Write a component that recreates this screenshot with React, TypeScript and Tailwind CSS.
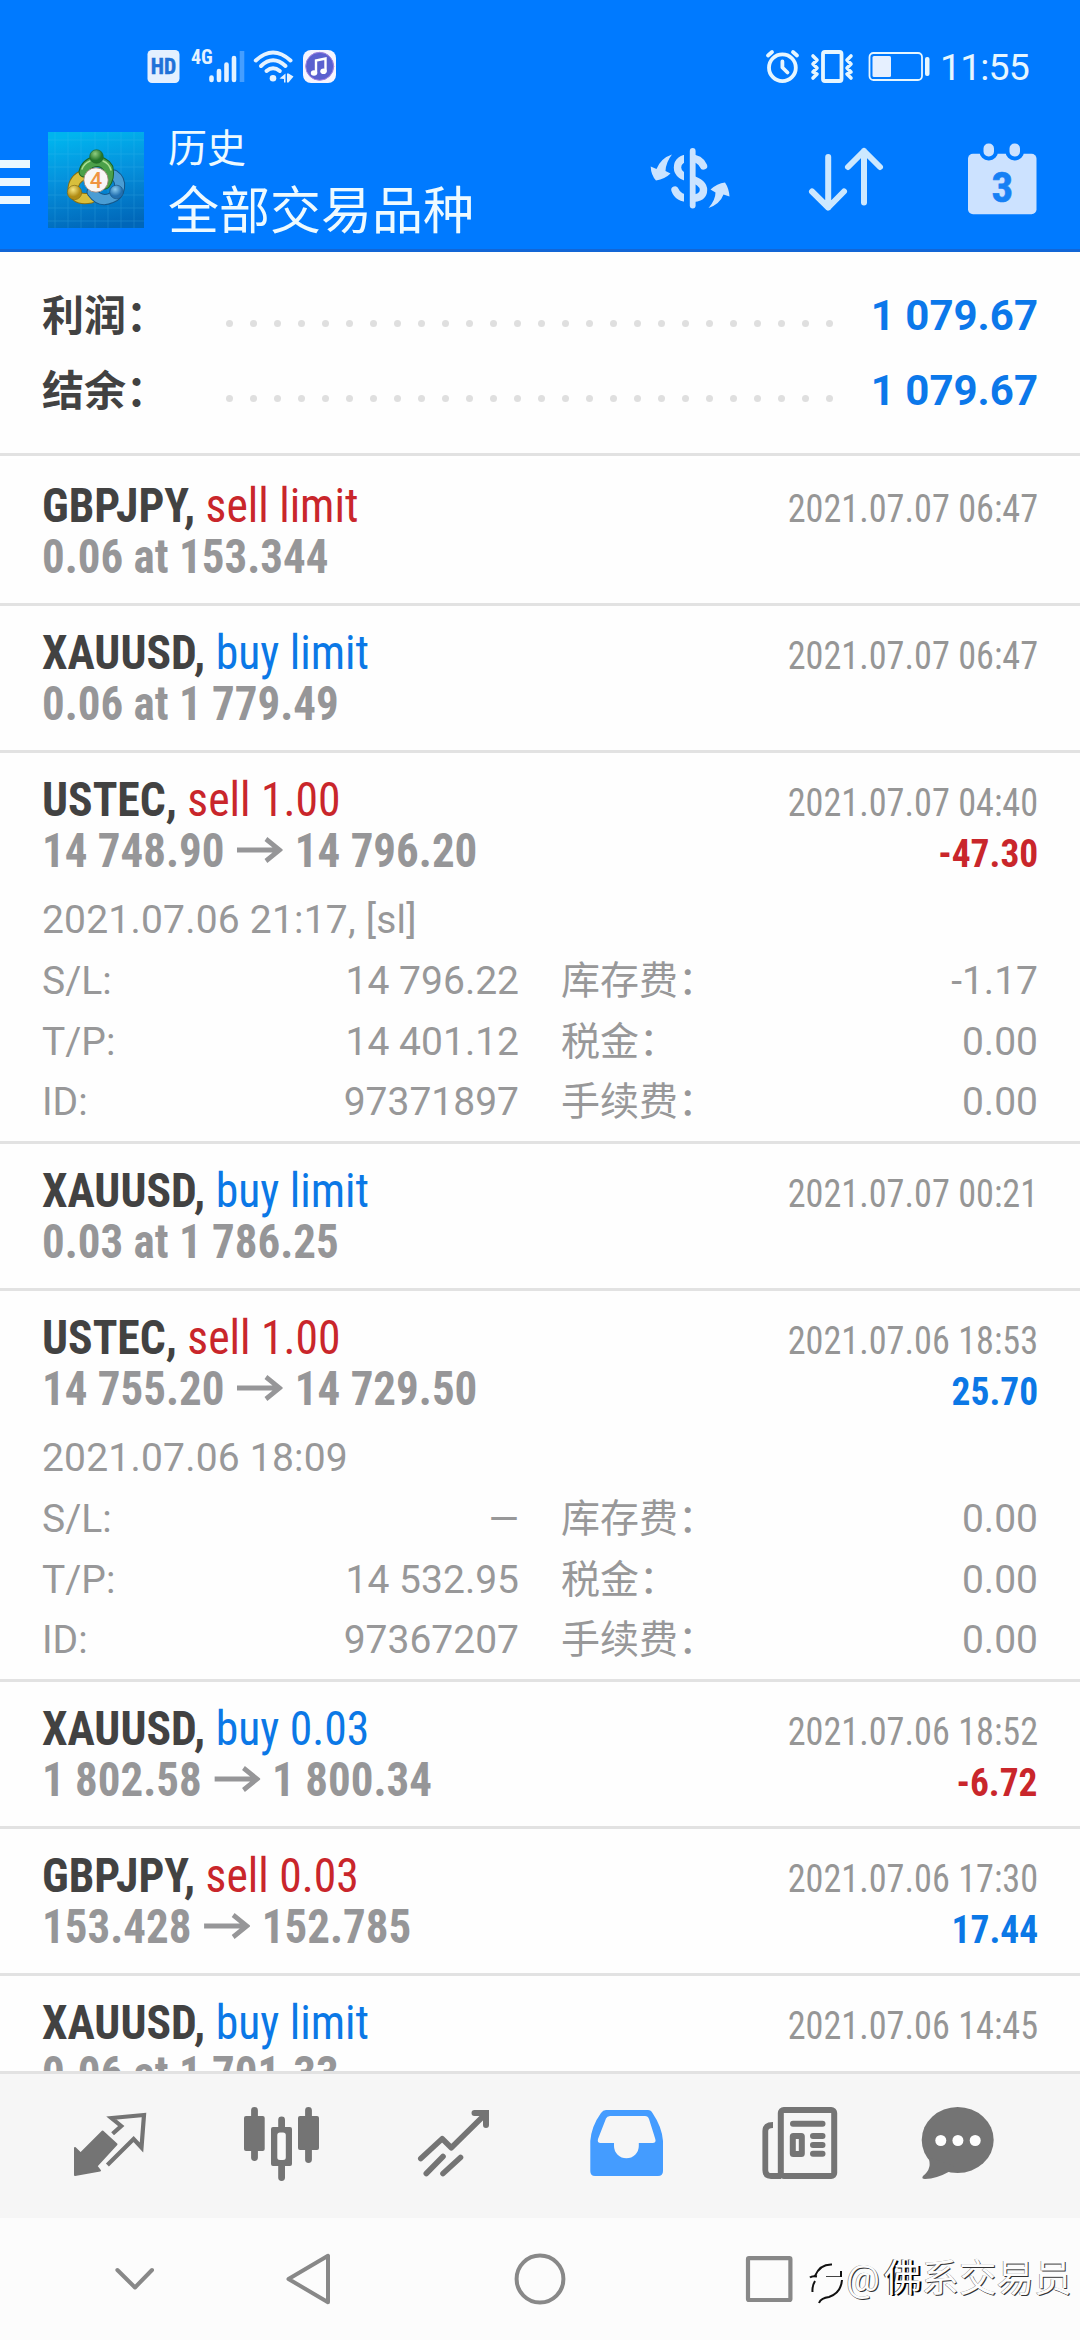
type Deal = {
  symbol: string;
  side: 'buy' | 'sell';
  volume: string;
  time: string;
  from: string;
  to?: string;
  profit?: string;
  details?: { opened: string; rows: [string, string, string, string][] };
};

const deals: Deal[] = [
  { symbol: 'GBPJPY', side: 'sell', volume: 'limit', time: '2021.07.07 06:47', from: '0.06 at 153.344' },
  { symbol: 'XAUUSD', side: 'buy', volume: 'limit', time: '2021.07.07 06:47', from: '0.06 at 1 779.49' },
  {
    symbol: 'USTEC',
    side: 'sell',
    volume: '1.00',
    time: '2021.07.07 04:40',
    from: '14 748.90',
    to: '14 796.20',
    profit: '-47.30',
    details: {
      opened: '2021.07.06 21:17, [sl]',
      rows: [
        ['S/L:', '14 796.22', '库存费：', '-1.17'],
        ['T/P:', '14 401.12', '税金：', '0.00'],
        ['ID:', '97371897', '手续费：', '0.00'],
      ],
    },
  },
  { symbol: 'XAUUSD', side: 'buy', volume: 'limit', time: '2021.07.07 00:21', from: '0.03 at 1 786.25' },
  {
    symbol: 'USTEC',
    side: 'sell',
    volume: '1.00',
    time: '2021.07.06 18:53',
    from: '14 755.20',
    to: '14 729.50',
    profit: '25.70',
    details: {
      opened: '2021.07.06 18:09',
      rows: [
        ['S/L:', '—', '库存费：', '0.00'],
        ['T/P:', '14 532.95', '税金：', '0.00'],
        ['ID:', '97367207', '手续费：', '0.00'],
      ],
    },
  },
  { symbol: 'XAUUSD', side: 'buy', volume: '0.03', time: '2021.07.06 18:52', from: '1 802.58', to: '1 800.34', profit: '-6.72' },
  { symbol: 'GBPJPY', side: 'sell', volume: '0.03', time: '2021.07.06 17:30', from: '153.428', to: '152.785', profit: '17.44' },
  { symbol: 'XAUUSD', side: 'buy', volume: 'limit', time: '2021.07.06 14:45', from: '0.06 at 1 701.33' },
];

function StatusLeft() {
  return (
    <svg width="200" height="50" viewBox="140 40 200 50" fill="none" stroke="#e4f2ff" strokeLinecap="round">
      <rect x="147.5" y="50" width="32" height="33" rx="4.5" fill="#e4f0ff" stroke="none" />
      <text x="163.5" y="74" textAnchor="middle" fontSize="21.500" stroke="#1f72d8" strokeWidth="0.500" fill="#1f72d8" className="font-['Roboto_Condensed'] font-bold">HD</text>
      <text x="191" y="63.5" fontSize="20" stroke="none" fill="#e4f2ff" className="font-['Roboto_Condensed'] font-bold">4G</text>
      <g strokeWidth="4.6">
        <path d="M211.5 77.5V80M219 71V80M226.5 64.5V80M234 58V80" />
        <path d="M242 51V82" strokeLinecap="butt" opacity="0.3" />
      </g>
      <path d="M255.8 60.5Q273 44.500 290.500 60.500" strokeWidth="4" />
      <path d="M261 66Q273 54.500 285.500 66" strokeWidth="4" />
      <path d="M266.500 71Q273 65.500 279.800 71" strokeWidth="4" />
      <circle cx="273" cy="78.300" r="3.300" fill="#e4f2ff" stroke="none" />
      <path d="M279.500 78.500L285.500 73.500V82.500H284V79ZM287 73.500H288.500L293.500 76.500L288.500 82.500H287Z" fill="#e4f2ff" stroke="none" />
      <rect x="303" y="50" width="33" height="33" rx="8" fill="#f6f5ff" stroke="none" />
      <circle cx="319.700" cy="66.300" r="14" fill="#5b60cf" stroke="#a183e0" strokeWidth="1" />
      <path d="M316 73.500V60.500L325.500 58.500V71.500" stroke="#fff" strokeWidth="2.400" strokeLinecap="butt" />
      <ellipse cx="314" cy="73" rx="3.200" ry="2.800" fill="#fff" stroke="none" />
      <ellipse cx="323.500" cy="71.300" rx="3.200" ry="2.800" fill="#fff" stroke="none" />
    </svg>
  );
}

function StatusRight() {
  return (
    <svg width="174" height="50" viewBox="760 40 174 50" fill="none" stroke="#e6f6ff" strokeLinecap="round" strokeLinejoin="round">
      <g strokeWidth="3.800">
        <circle cx="782.400" cy="67.700" r="13.400" />
        <path d="M782.400 61.500V67.500L787.500 72.500M768 55.500L772 52M793 52L797 55.500" />
        <rect x="823" y="52" width="18.500" height="29" rx="2" />
      </g>
      <path d="M813 56L817 60L813 64L817 68L813 72L817 74L813 78M851 56L847 60L851 64L847 68L851 72L847 74L851 78" strokeWidth="3.600" />
      <rect x="869.500" y="53" width="52.500" height="27" rx="4" strokeWidth="1.800" />
      <rect x="872.500" y="56" width="18.500" height="21" rx="1.500" fill="#e6f0ff" stroke="none" />
      <rect x="925" y="57" width="4.500" height="19" rx="2" fill="#e6f6ff" stroke="none" />
    </svg>
  );
}

function AppLogo() {
  return (
    <svg width="96" height="96" viewBox="48 132 96 96">
      <defs>
        <linearGradient id="sky" x1="0.400" y1="0" x2="0.600" y2="1">
          <stop offset="0" stopColor="#00b4ee" />
          <stop offset="0.450" stopColor="#0590dc" />
          <stop offset="1" stopColor="#0066b8" />
        </linearGradient>
        <radialGradient id="green" cx="0.400" cy="0.300"><stop offset="0" stopColor="#8fcd80" /><stop offset="1" stopColor="#23762a" /></radialGradient>
        <radialGradient id="yellow" cx="0.400" cy="0.300"><stop offset="0" stopColor="#f7e680" /><stop offset="1" stopColor="#b08c14" /></radialGradient>
        <radialGradient id="azure" cx="0.400" cy="0.300"><stop offset="0" stopColor="#8acbf0" /><stop offset="1" stopColor="#2270b0" /></radialGradient>
      </defs>
      <rect x="48" y="132" width="96" height="96" fill="url(#sky)" />
      <path d="M55 132V228M68 132V228M81 132V228M95 132V228M108 132V228M121 132V228M134 132V228M48 140H144M48 154H144M48 167H144M48 181H144M48 195H144M48 208H144M48 221H144" stroke="#58c5f2" strokeWidth="0.800" opacity="0.250" />
      <g fill="none" strokeLinecap="round">
        <path d="M84 175A15 15 0 0 0 73 190Q76 201 91 198" stroke="#846f14" strokeWidth="11" />
        <path d="M84 175A15 15 0 0 0 73 190Q76 201 91 198" stroke="#d8bf3c" strokeWidth="9" />
        <path d="M92 192Q100 203 111 198A13 13 0 0 0 114 175" stroke="#145689" strokeWidth="11" />
        <path d="M92 192Q100 203 111 198A13 13 0 0 0 114 175" stroke="#4a9dd4" strokeWidth="9" />
        <path d="M84 172A13 13 0 0 1 108 168Q110 178 105 184" stroke="#1c6322" strokeWidth="11" />
        <path d="M84 172A13 13 0 0 1 108 168Q110 178 105 184" stroke="#4ba049" strokeWidth="9" />
        <path d="M82 169A14 14 0 0 1 90 161M103 161A14 14 0 0 1 111 170" stroke="#a9de92" strokeWidth="1.500" />
      </g>
      <circle cx="96.500" cy="156.500" r="6.800" fill="url(#green)" stroke="#1f5f24" strokeWidth="0.600" />
      <circle cx="74.500" cy="192.500" r="7.200" fill="url(#yellow)" stroke="#7b6412" strokeWidth="0.600" />
      <circle cx="116.500" cy="192" r="6.800" fill="url(#azure)" stroke="#174f7c" strokeWidth="0.600" />
      <circle cx="96" cy="180" r="12.200" fill="#f8f6f5" stroke="#9b7c6c" strokeWidth="0.800" />
      <text x="96" y="188" textAnchor="middle" fontSize="22" fill="#ef9440" className="font-['Roboto'] font-medium">4</text>
    </svg>
  );
}

function DollarIcon() {
  return (
    <svg width="100" height="80" viewBox="640 140 100 80" fill="#cce4ff">
      <clipPath id="split">
        <path d="M660 140H684V220H660ZM690 140H730V220H690Z" />
      </clipPath>
      <g clipPath="url(#split)" fill="none" stroke="#cce4ff" strokeWidth="7.400" strokeLinecap="round">
        <path d="M703.500 166C701 160.500 697 158 690 158C682 158 677.500 161.500 677.500 167.500C677.500 174 683 176.500 690 178.500C699 181 703.500 184.500 703.500 190C703.500 195.500 699 198.500 690 198.500C682 198.500 677 195.500 675 190" />
      </g>
      <path d="M692.700 151V205.500" stroke="#cce4ff" strokeWidth="5.800" strokeLinecap="round" />
      <path d="M672 154.500Q661 158 656.500 169L650.700 166.500Q651 175 656 180.500Q665 179 670.500 173.500L665.500 171Q666 162 672 154.500Z" />
      <path d="M708.500 208Q715.500 200 715.500 192.500L710.500 189.500Q717 183.500 725 182.500Q729 188.500 729.500 196.500L723.500 194.500Q720 204 708.500 208Z" />
    </svg>
  );
}

function SortIcon() {
  return (
    <svg width="100" height="80" viewBox="800 140 100 80" fill="none" stroke="#cce8ff" strokeWidth="6" strokeLinecap="round" strokeLinejoin="round">
      <path d="M828.200 157V207.500M812 191.500L828.200 207.500L844 191.500M864 202.500V151M848 167L864 151L880 167" />
    </svg>
  );
}

function CalendarIcon() {
  return (
    <svg width="84" height="80" viewBox="960 140 84 80">
      <rect x="968" y="153.700" width="68.500" height="60.500" rx="5" fill="#cce2ff" />
      <g fill="#cce2ff" stroke="#007aff" strokeWidth="4">
        <rect x="981.500" y="141.500" width="14.500" height="17" rx="7" />
        <rect x="1007.500" y="141.500" width="14.500" height="17" rx="7" />
      </g>
      <text x="1002.300" y="201.500" textAnchor="middle" fontSize="43" fill="#1680f5" stroke="#1680f5" strokeWidth="0.600" className="font-['Roboto_Condensed'] font-bold">3</text>
    </svg>
  );
}

function Header() {
  return (
    <header className="h-[252px] border-b-[3px] border-[#1266d6] bg-[#007aff]">
      <div className="flex h-[90px] items-start pt-10">
        <div className="ml-[140px] flex-1"><StatusLeft /></div>
        <StatusRight />
        <span className="mr-[50px] ml-1.5 w-[90px] text-[37.500px] leading-[55px] tracking-[-0.900px] whitespace-nowrap text-[#e6f6ff]">11:55</span>
      </div>
      <div className="flex h-[159px] text-[#eefaff]">
        <div className="mt-[70px] flex w-[30px] flex-col gap-2.5">
          <i className="h-2 bg-[#eaf8ff]" />
          <i className="h-2 bg-[#eaf8ff]" />
          <i className="h-2 bg-[#eaf8ff]" />
        </div>
        <div className="mt-[42px] ml-[18px]"><AppLogo /></div>
        <div className="ml-6 flex-1 pt-[30px]">
          <p className="text-[39px] leading-[59px]">历史</p>
          <p className="text-[51px] leading-[65px] whitespace-nowrap">全部交易品种</p>
        </div>
        <div className="mt-[50px] mr-9 flex gap-[60px]">
          <DollarIcon />
          <SortIcon />
          <CalendarIcon />
        </div>
      </div>
    </header>
  );
}

function SummaryRow({ label, value }: { label: string; value: string }) {
  return (
    <div className="flex h-[75px] items-center text-[42px] leading-[75px] font-bold">
      <span className="w-[184px] pt-px text-[#424242]">{label}</span>
      <span className="mt-[15px] flex w-[607px] justify-between">
        {Array.from({ length: 26 }, (_, i) => (
          <i key={i} className="size-[7px] rounded-full bg-[#dfdfdf]" />
        ))}
      </span>
      <span className="flex-1 text-right text-[#0c78ea]">{value}</span>
    </div>
  );
}

function LongArrow() {
  return (
    <svg width="49" height="26" viewBox="0 0 49 26" fill="none" stroke="#969698" strokeWidth="5" className="mx-[13px] inline-block align-[4px]">
      <path d="M0 13H45M31 2L45.500 13L31 24" />
    </svg>
  );
}

function DealRow({ deal, first }: { deal: Deal; first: boolean }) {
  const tone = deal.side === 'sell' ? 'text-[#c9262b]' : 'text-[#0b78e6]';
  const profitTone = deal.profit?.startsWith('-') ? 'text-[#c9262b]' : 'text-[#0b78e6]';
  return (
    <section
      className={`shrink-0 border-t-[3px] px-[42px] pt-[21px] ${first ? 'border-white' : 'border-[#e2e2e2]'} ${deal.details ? 'h-[391px]' : 'h-[147px]'}`}
    >
      <div className="flex h-[51px] items-baseline justify-between font-['Roboto_Condensed','Noto_Sans_CJK_SC',sans-serif] text-5xl leading-[51px]">
        <p className="origin-left scale-x-[0.95] whitespace-nowrap">
          <b className="text-[#424242]">{deal.symbol},</b>{' '}
          <span className={tone}>{deal.side} {deal.volume}</span>
        </p>
        <time className="origin-right scale-x-[0.917] text-[39.500px] leading-[51px] text-[#969696]">{deal.time}</time>
      </div>
      <div className="flex h-[51px] items-baseline justify-between font-['Roboto_Condensed','Noto_Sans_CJK_SC',sans-serif] text-5xl leading-[51px] font-bold">
        <p className="origin-left scale-x-[0.937] whitespace-nowrap text-[#969698]">
          {deal.from}
          {deal.to && <><LongArrow />{deal.to}</>}
        </p>
        {deal.profit && <span className={`origin-right scale-x-[0.96] text-[39px] leading-[51px] ${profitTone}`}>{deal.profit}</span>}
      </div>
      {deal.details && (
        <div className="mt-[14px] text-[39px] leading-[61px] text-[#989899]">
          <p className="tracking-[0.200px]">{deal.details.opened}</p>
          {deal.details.rows.map(([k1, v1, k2, v2]) => (
            <div key={k1} className="flex h-[60.700px]">
              <span className="w-[120px]">{k1}</span>
              <span className="w-[357px] text-right">{v1}</span>
              <span className="ml-[42px] w-[200px] whitespace-nowrap">{k2}</span>
              <span className="flex-1 text-right">{v2}</span>
            </div>
          ))}
        </div>
      )}
    </section>
  );
}

function TabBar() {
  return (
    <nav className="flex h-[147px] gap-[88px] border-t-[3px] border-[#e2e2e2] bg-[#f6f6f6] pt-7 pl-[68px] text-[#747474]">
      <svg width="84" height="84" viewBox="68 2102 84 84" fill="currentColor">
        <path d="M102.600 2131.500L116.500 2144.300L96.500 2166L100 2170.500L75 2175V2148L80.600 2153.500Z" stroke="currentColor" strokeWidth="2" strokeLinejoin="round" />
        <path d="M112.600 2133.700L121.200 2126L111.500 2118L144 2115L141.500 2147.500L133.600 2139L107.400 2165" fill="none" stroke="currentColor" strokeWidth="4.200" />
      </svg>
      <svg width="84" height="84" viewBox="240 2102 84 84" fill="currentColor">
        <path d="M254.500 2110.500V2157.500M308.500 2110.500V2159.500M281.600 2120V2130M281.600 2163V2177.500" stroke="currentColor" strokeWidth="6.800" strokeLinecap="round" />
        <rect x="244" y="2116" width="20.700" height="35" rx="2" />
        <rect x="298" y="2116" width="21" height="34" rx="2" />
        <path fill="#f9f9f9" d="M276 2131H287V2162H276Z" />
        <path fillRule="evenodd" d="M273 2127H290Q292 2127 292 2129V2164Q292 2166 290 2166H273Q271 2166 271 2164V2129Q271 2127 273 2127ZM280 2132.500Q277.300 2132.500 277.300 2135V2157.500Q277.300 2160 280 2160H283Q285.800 2160 285.800 2157.500V2135Q285.800 2132.500 283 2132.500Z" />
      </svg>
      <svg width="84" height="84" viewBox="412 2102 84 84" fill="none" stroke="currentColor" strokeWidth="5.600">
        <path d="M420.800 2158.500L442.200 2138.700L451.300 2147.700L486 2113.500" strokeLinejoin="round" strokeLinecap="round" />
        <path d="M474.500 2113H486V2125" strokeWidth="6" strokeLinecap="round" />
        <path d="M426.300 2173.500L443 2156.500M443 2173.500L460.500 2157.500" strokeLinecap="round" />
      </svg>
      <svg width="84" height="84" viewBox="584 2102 84 84" fill="#449cff">
        <path fillRule="evenodd" d="M606 2110H648Q651 2110 652.500 2113Q662 2127 663 2141V2171Q663 2176 658 2176H595Q590.300 2176 590.300 2171V2141Q591.500 2126 601 2113Q603 2110 606 2110ZM610 2116Q607 2116 606 2118.500L598 2139Q597 2143 600.500 2143H614V2146A12.400 12.200 0 0 0 638.800 2146V2143H652.500Q656.500 2143 655.300 2139L649 2119Q648 2116 645 2116Z" />
      </svg>
      <svg width="84" height="84" viewBox="756 2102 84 84" fill="none" stroke="currentColor" strokeWidth="6">
        <rect x="780.800" y="2110" width="53.400" height="66" rx="3" />
        <path d="M773 2125Q765.300 2125 765.300 2131V2170Q765.300 2176 771 2176H781" strokeWidth="5.800" />
        <path d="M793 2123.800H822.500M813 2136H822.500M813 2145H822.500M813 2153.800H822.500" strokeLinecap="round" />
        <rect x="792.800" y="2136" width="9" height="18" rx="0.500" />
      </svg>
      <svg width="84" height="84" viewBox="916 2102 84 84" fill="currentColor" className="-ml-3">
        <ellipse cx="957.700" cy="2140" rx="36" ry="33" />
        <path d="M928 2157Q933 2168 923 2176Q921 2179 925 2179Q937 2178.500 948.500 2172L954 2166Z" />
        <g fill="#fff">
          <circle cx="940.800" cy="2140.500" r="5.500" />
          <circle cx="957.900" cy="2140.500" r="5.500" />
          <circle cx="975.200" cy="2140.500" r="5.500" />
        </g>
      </svg>
    </nav>
  );
}

function SystemNav() {
  return (
    <footer className="flex h-[122px] items-start bg-[#fcfcfc] pt-[31px] text-[#888888]">
      <svg width="60" height="60" viewBox="105 2249 60 60" fill="none" stroke="currentColor" strokeWidth="4" strokeLinecap="round" strokeLinejoin="round" className="ml-[105px]">
        <path d="M117.400 2270L135 2287.500L152 2270" />
      </svg>
      <svg width="60" height="60" viewBox="278 2249 60 60" fill="none" stroke="currentColor" strokeWidth="4" strokeLinejoin="round" className="ml-[113px]">
        <path d="M288.500 2279L328 2255.800V2302.200Z" />
      </svg>
      <svg width="60" height="60" viewBox="510 2249 60 60" fill="none" stroke="currentColor" strokeWidth="4" className="ml-[172px]">
        <circle cx="540" cy="2279" r="23.400" />
      </svg>
      <svg width="60" height="60" viewBox="739 2249 60 60" fill="none" stroke="currentColor" strokeWidth="4.200" strokeLinejoin="round" className="ml-[169px]">
        <rect x="748" y="2258.200" width="42.400" height="41.800" rx="1" />
      </svg>
      <svg width="40" height="60" viewBox="806 2249 40 60" fill="none" stroke="#111" strokeWidth="2" className="ml-[7px]">
        <path d="M815 2276Q820 2264 832 2264.500M810 2277.500Q812 2275.500 817 2276.500M815 2281Q812 2286 812.500 2292M841 2271V2277M819 2303Q821 2298 829 2297Q841 2293 842 2280" />
        <path d="M826 2276.500H841" strokeWidth="0.800" />
      </svg>
      <span className="flex text-[37.500px] leading-[58px] whitespace-nowrap text-[#fdfdfd] [text-shadow:1px_1px_0_#333,-0.5px_-0.5px_0_#777]">
        <span className="w-[38px]">@</span>
        <span className="[text-shadow:2px_1px_0_#000,-1px_0_0_#333]">佛</span>
        系交易员
      </span>
    </footer>
  );
}

export default function App() {
  return (
    <div className="flex h-[2340px] w-[1080px] flex-col overflow-hidden bg-[#fefefe] font-['Roboto','Noto_Sans_CJK_SC',sans-serif]">
      <Header />
      <div className="h-[204px] border-b-[3px] border-[#e2e2e2] px-[42px] pt-[26px]">
        <SummaryRow label="利润：" value="1 079.67" />
        <SummaryRow label="结余：" value="1 079.67" />
      </div>
      <main className="flex h-[1615px] flex-col overflow-hidden">
        {deals.map((deal, i) => (
          <DealRow key={i} deal={deal} first={i === 0} />
        ))}
      </main>
      <TabBar />
      <SystemNav />
    </div>
  );
}
